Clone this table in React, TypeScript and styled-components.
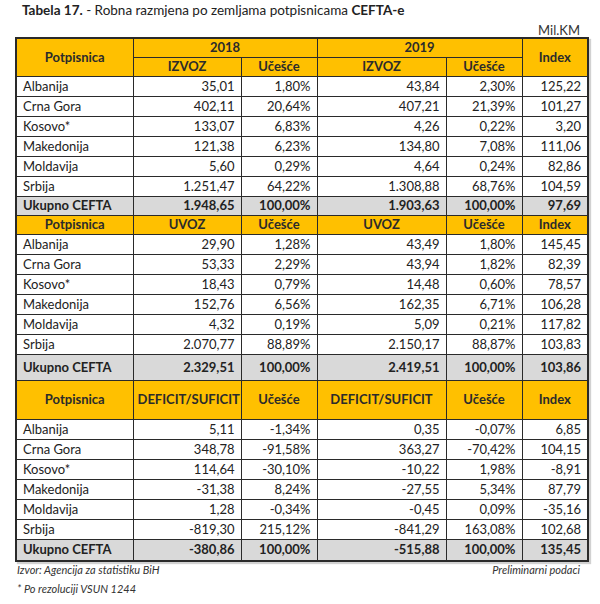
import React from "react";
import styled, { createGlobalStyle } from "styled-components";

const Global = createGlobalStyle`
  html, body { margin: 0; padding: 0; background: #fff; }
  body { font-family: Lato, "Open Sans", "Liberation Sans", sans-serif; color: #1e1e1e; }
`;

const Page = styled.div`
  width: 600px;
  height: 604px;
  box-sizing: border-box;
  padding: 2px 13px 0 15px;
`;

const Title = styled.div`
  font-size: 13.5px;
  line-height: 17px;
  padding-left: 7px;
  color: #222;
  b { font-weight: 700; }
`;

const Unit = styled.div`
  text-align: right;
  font-size: 13px;
  line-height: 15px;
  padding-right: 7px;
  margin-top: 4px;
  color: #333;
`;

const Table = styled.table`
  width: 572px;
  border-collapse: collapse;
  table-layout: fixed;
  margin-top: -1px;
  border: 2px solid #2a2a2a;
  box-shadow: 2px 2px 1px rgba(0,0,0,0.18);
  font-size: 13px;
`;

const Row = styled.tr<{ $h: number }>`
  height: ${(p) => p.$h}px;
`;

const Head = styled.th`
  background: #ffc000;
  border: 1px solid #2a2a2a;
  font-weight: 700;
  font-size: 13px;
  color: #2b2b2b;
  text-align: center;
  padding: 0 4px;
  line-height: 15px;
`;

const Cell = styled.td<{ $total?: boolean; $left?: boolean }>`
  border: 1px solid #2a2a2a;
  background: ${(p) => (p.$total ? "#d9d9d9" : "#fff")};
  font-weight: ${(p) => (p.$total ? 700 : 400)};
  text-align: ${(p) => (p.$left ? "left" : "right")};
  padding: ${(p) => (p.$left ? "0 4px 0 6px" : "0 6px 0 4px")};
  line-height: 15px;
  white-space: nowrap;
  color: #222;
`;

const Footer = styled.div`
  display: flex;
  justify-content: space-between;
  font-style: italic;
  font-size: 11px;
  line-height: 14px;
  color: #333;
  padding: 1px 7px 0 2px;
`;

const Note = styled.div`
  font-style: italic;
  font-size: 11px;
  line-height: 14px;
  color: #333;
  padding: 5px 0 0 2px;
`;

type R = [string, string, string, string, string, string];

const izvoz: R[] = [
  ["Albanija", "35,01", "1,80%", "43,84", "2,30%", "125,22"],
  ["Crna Gora", "402,11", "20,64%", "407,21", "21,39%", "101,27"],
  ["Kosovo*", "133,07", "6,83%", "4,26", "0,22%", "3,20"],
  ["Makedonija", "121,38", "6,23%", "134,80", "7,08%", "111,06"],
  ["Moldavija", "5,60", "0,29%", "4,64", "0,24%", "82,86"],
  ["Srbija", "1.251,47", "64,22%", "1.308,88", "68,76%", "104,59"],
  ["Ukupno CEFTA", "1.948,65", "100,00%", "1.903,63", "100,00%", "97,69"],
];

const uvoz: R[] = [
  ["Albanija", "29,90", "1,28%", "43,49", "1,80%", "145,45"],
  ["Crna Gora", "53,33", "2,29%", "43,94", "1,82%", "82,39"],
  ["Kosovo*", "18,43", "0,79%", "14,48", "0,60%", "78,57"],
  ["Makedonija", "152,76", "6,56%", "162,35", "6,71%", "106,28"],
  ["Moldavija", "4,32", "0,19%", "5,09", "0,21%", "117,82"],
  ["Srbija", "2.070,77", "88,89%", "2.150,17", "88,87%", "103,83"],
  ["Ukupno CEFTA", "2.329,51", "100,00%", "2.419,51", "100,00%", "103,86"],
];

const deficit: R[] = [
  ["Albanija", "5,11", "-1,34%", "0,35", "-0,07%", "6,85"],
  ["Crna Gora", "348,78", "-91,58%", "363,27", "-70,42%", "104,15"],
  ["Kosovo*", "114,64", "-30,10%", "-10,22", "1,98%", "-8,91"],
  ["Makedonija", "-31,38", "8,24%", "-27,55", "5,34%", "87,79"],
  ["Moldavija", "1,28", "-0,34%", "-0,45", "0,09%", "-35,16"],
  ["Srbija", "-819,30", "215,12%", "-841,29", "163,08%", "102,68"],
  ["Ukupno CEFTA", "-380,86", "100,00%", "-515,88", "100,00%", "135,45"],
];

const Section: React.FC<{ rows: R[]; rowH: number; totalH: number }> = ({ rows, rowH, totalH }) => (
  <>
    {rows.map((r, i) => {
      const total = i === rows.length - 1;
      return (
        <Row key={r[0]} $h={total ? totalH : rowH}>
          {r.map((v, j) => (
            <Cell key={j} $left={j === 0} $total={total}>
              {v}
            </Cell>
          ))}
        </Row>
      );
    })}
  </>
);

const SubHead: React.FC<{ label: string; h: number }> = ({ label, h }) => (
  <Row $h={h}>
    <Head>Potpisnica</Head>
    <Head>{label}</Head>
    <Head>Učešće</Head>
    <Head>{label}</Head>
    <Head>Učešće</Head>
    <Head>Index</Head>
  </Row>
);

export default function App() {
  return (
    <Page>
      <Global />
      <Title>
        <b>Tabela 17.</b> - Robna razmjena po zemljama potpisnicama <b>CEFTA-e</b>
      </Title>
      <Unit>Mil.KM</Unit>
      <Table>
        <colgroup>
          <col style={{ width: 117 }} />
          <col style={{ width: 108 }} />
          <col style={{ width: 76 }} />
          <col style={{ width: 129 }} />
          <col style={{ width: 76 }} />
          <col style={{ width: 66 }} />
        </colgroup>
        <tbody>
          <Row $h={19}>
            <Head rowSpan={2}>Potpisnica</Head>
            <Head colSpan={2}>2018</Head>
            <Head colSpan={2}>2019</Head>
            <Head rowSpan={2}>Index</Head>
          </Row>
          <Row $h={19}>
            <Head>IZVOZ</Head>
            <Head>Učešće</Head>
            <Head>IZVOZ</Head>
            <Head>Učešće</Head>
          </Row>
          <Section rows={izvoz} rowH={20} totalH={19} />
          <SubHead label="UVOZ" h={19} />
          <Section rows={uvoz} rowH={20} totalH={26} />
          <SubHead label="DEFICIT/SUFICIT" h={39} />
          <Section rows={deficit} rowH={20} totalH={22} />
        </tbody>
      </Table>
      <Footer>
        <span>Izvor: Agencija za statistiku BiH</span>
        <span>Preliminarni podaci</span>
      </Footer>
      <Note>* Po rezoluciji VSUN 1244</Note>
    </Page>
  );
}
